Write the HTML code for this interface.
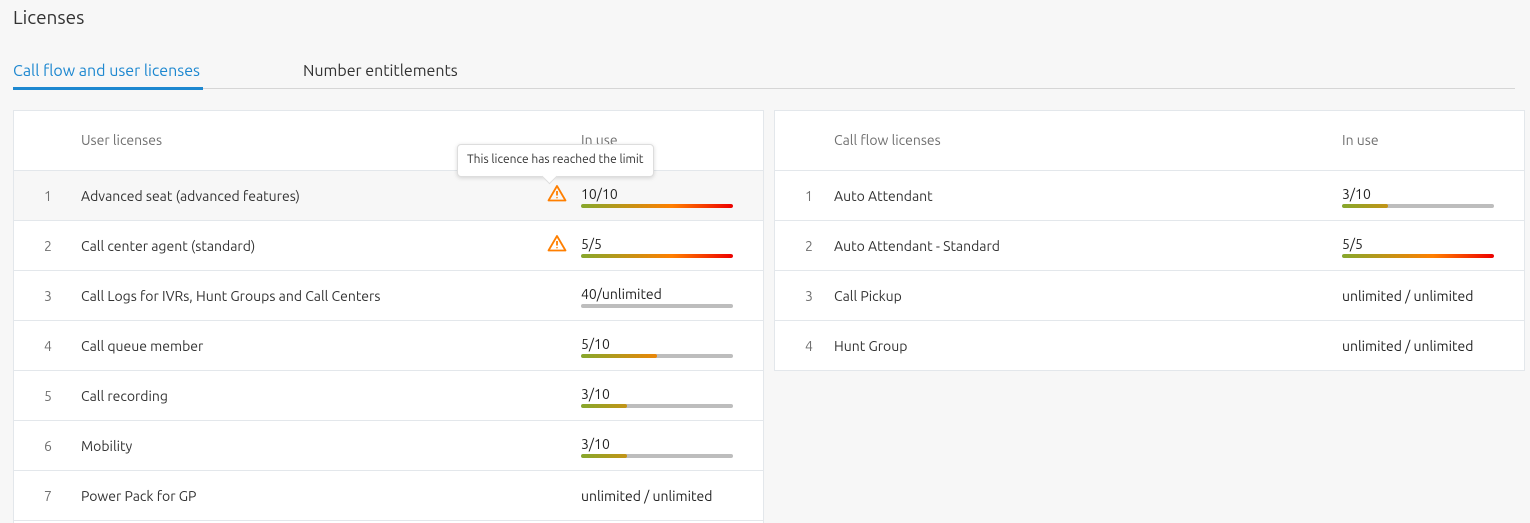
<!DOCTYPE html>
<html><head><style>
*{box-sizing:border-box;margin:0;padding:0}
html{width:1530px;height:523px;overflow:hidden}
body{width:1530px;height:523px;overflow:hidden;background:#f7f7f7;font-family:"Ubuntu","Liberation Sans","DejaVu Sans",sans-serif;color:#333;position:relative}
.title{position:absolute;left:13px;top:6px;font-size:19px;color:#333}
.tab{position:absolute;top:62px;font-size:16px}
.line{position:absolute;left:13px;top:88px;width:1502px;height:1px;background:#d6d6d6}
.ul{position:absolute;left:13px;top:87px;width:190px;height:3px;background:#1e88d0}
.panel{position:absolute;background:#fff;border:1px solid #e3e7eb;overflow:hidden}
.row{position:absolute;left:0;right:0;height:50px;border-top:1px solid #e3e7eb;font-size:14px}
.hdr{position:absolute;top:21px;font-size:14px;color:#707070}
.n{position:absolute;top:17px;width:20px;text-align:center;color:#707070}
.nm{position:absolute;top:17px;color:#333}
.iu{position:absolute;top:15px;color:#222}
.bar{position:absolute;top:33px;width:152px;height:4px;background:#bdbdbd;border-radius:2px;overflow:hidden}
.bar i{display:block;height:4px;background:linear-gradient(90deg,#86a82c,#ff7f00 60%,#e00 100%);background-size:152px 4px;border-radius:2px}
.warn{position:absolute;top:13px}
.tip{position:absolute;left:457px;top:144px;width:197px;height:33px;background:#fff;border:1px solid #ddd;border-radius:4px;box-shadow:0 1px 4px rgba(0,0,0,.15);font-size:12px;color:#333;padding:8px 0 0 9px;z-index:5}
.tip:after{content:"";position:absolute;left:86px;bottom:-6px;width:10px;height:10px;background:#fff;transform:rotate(45deg);border-right:1px solid #ddd;border-bottom:1px solid #ddd}
</style></head><body>
<div class="title">Licenses</div>
<div class="tab" style="left:13px;color:#1e88d0">Call flow and user licenses</div>
<div class="tab" style="left:303px;color:#333">Number entitlements</div>
<div class="line"></div><div class="ul"></div>

<div class="panel" style="left:13px;top:110px;width:751px;height:413px;border-bottom:none">
<div class="hdr" style="left:67px">User licenses</div>
<div class="hdr" style="left:567px">In use</div>
<div class="row" style="top:59px;background:#f7f7f7"><div class="n" style="left:24px">1</div><div class="nm" style="left:67px">Advanced seat (advanced features)</div>
<svg class="warn" style="left:533px" width="20" height="18" viewBox="0 0 20 18"><path d="M10 2 L18.5 16.5 H1.5 Z" fill="none" stroke="#ff7f00" stroke-width="1.8" stroke-linejoin="round"/><path d="M10 7v4.5M10 13.2v1" stroke="#ff7f00" stroke-width="1.8"/></svg>
<div class="iu" style="left:567px">10/10</div><div class="bar" style="left:567px"><i style="width:152px"></i></div></div>
<div class="row" style="top:109px"><div class="n" style="left:24px">2</div><div class="nm" style="left:67px">Call center agent (standard)</div>
<svg class="warn" style="left:533px" width="20" height="18" viewBox="0 0 20 18"><path d="M10 2 L18.5 16.5 H1.5 Z" fill="none" stroke="#ff7f00" stroke-width="1.8" stroke-linejoin="round"/><path d="M10 7v4.5M10 13.2v1" stroke="#ff7f00" stroke-width="1.8"/></svg>
<div class="iu" style="left:567px">5/5</div><div class="bar" style="left:567px"><i style="width:152px"></i></div></div>
<div class="row" style="top:159px"><div class="n" style="left:24px">3</div><div class="nm" style="left:67px">Call Logs for IVRs, Hunt Groups and Call Centers</div>
<div class="iu" style="left:567px">40/unlimited</div><div class="bar" style="left:567px"></div></div>
<div class="row" style="top:209px"><div class="n" style="left:24px">4</div><div class="nm" style="left:67px">Call queue member</div>
<div class="iu" style="left:567px">5/10</div><div class="bar" style="left:567px"><i style="width:76px"></i></div></div>
<div class="row" style="top:259px"><div class="n" style="left:24px">5</div><div class="nm" style="left:67px">Call recording</div>
<div class="iu" style="left:567px">3/10</div><div class="bar" style="left:567px"><i style="width:46px"></i></div></div>
<div class="row" style="top:309px"><div class="n" style="left:24px">6</div><div class="nm" style="left:67px">Mobility</div>
<div class="iu" style="left:567px">3/10</div><div class="bar" style="left:567px"><i style="width:46px"></i></div></div>
<div class="row" style="top:359px"><div class="n" style="left:24px">7</div><div class="nm" style="left:67px">Power Pack for GP</div>
<div class="iu" style="left:567px;top:17px">unlimited / unlimited</div></div>
<div class="row" style="top:409px;height:3px"></div>
</div>
<div class="tip">This licence has reached the limit</div>

<div class="panel" style="left:774px;top:110px;width:751px;height:261px">
<div class="hdr" style="left:59px">Call flow licenses</div>
<div class="hdr" style="left:567px">In use</div>
<div class="row" style="top:59px"><div class="n" style="left:24px">1</div><div class="nm" style="left:59px">Auto Attendant</div>
<div class="iu" style="left:567px">3/10</div><div class="bar" style="left:567px"><i style="width:46px"></i></div></div>
<div class="row" style="top:109px"><div class="n" style="left:24px">2</div><div class="nm" style="left:59px">Auto Attendant - Standard</div>
<div class="iu" style="left:567px">5/5</div><div class="bar" style="left:567px"><i style="width:152px"></i></div></div>
<div class="row" style="top:159px"><div class="n" style="left:24px">3</div><div class="nm" style="left:59px">Call Pickup</div>
<div class="iu" style="left:567px;top:17px">unlimited / unlimited</div></div>
<div class="row" style="top:209px"><div class="n" style="left:24px">4</div><div class="nm" style="left:59px">Hunt Group</div>
<div class="iu" style="left:567px;top:17px">unlimited / unlimited</div></div>
</div>
</body></html>
